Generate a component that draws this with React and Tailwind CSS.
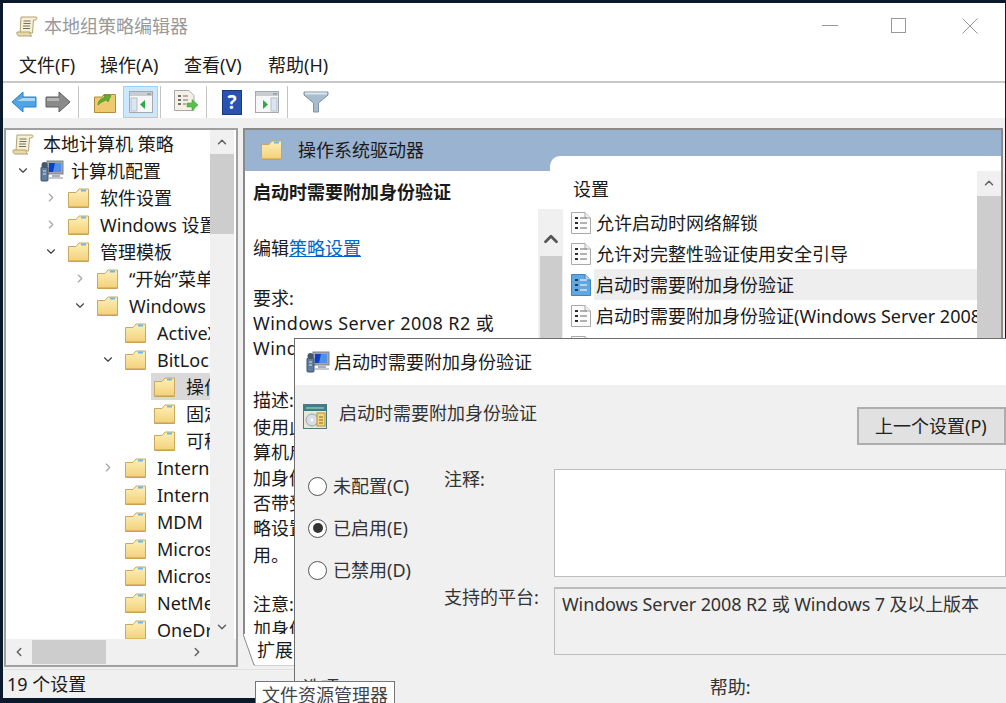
import { ChevronDown, ChevronLeft, ChevronRight, ChevronUp } from "lucide-react";

const FolderIcon = () => (
  <svg width="21" height="20" viewBox="0 0 21 20" className="shrink-0">
    <defs>
      <linearGradient id="fold" x1="0" y1="0" x2="0" y2="1">
        <stop offset="0" stopColor="#fdf0b8" />
        <stop offset="1" stopColor="#f3d078" />
      </linearGradient>
    </defs>
    <path d="M0.5 4.5 L0.5 19.5 L20.5 19.5 L20.5 1 L11 1 L8 4.5 Z" fill="url(#fold)" stroke="#c9a95f" />
    <path d="M13 1.5 H18 V3.5 H13 Z" fill="#6db6ea" />
    <path d="M1 18.5 H20 V19.5 H1 Z" fill="#c69c4e" />
  </svg>
);

const ScrollIcon = () => (
  <svg width="22" height="22" viewBox="0 0 22 22" className="shrink-0">
    <path d="M5 2 H20 C21.5 2 21.5 5 19 5 L17.5 5 L16.5 18 H4 Z" fill="#f6efd2" stroke="#b0a273" />
    <path d="M1 17 H14 C14 19 15 21 16 21 H3 C1.5 21 0.5 19 1 17 Z" fill="#e9d9a4" stroke="#b0a273" />
    <path d="M7.5 6 H14.5 M7.5 8.5 H14.5 M7 11 H14 M7 13.5 H14" stroke="#6f6f6f" />
  </svg>
);

const ComputerIcon = () => (
  <svg width="24" height="22" viewBox="0 0 24 22" className="shrink-0">
    <rect x="7" y="1" width="16" height="13" fill="#9fa6b0" stroke="#7c8490" />
    <rect x="9" y="3" width="12" height="9" fill="#0b3fd0" />
    <path d="M15 3 H21 V12 H13 Z" fill="#4f8ff0" />
    <rect x="12" y="15" width="8" height="2" fill="#aab0b8" />
    <rect x="9" y="17" width="14" height="2" fill="#c4c8ce" />
    <rect x="1" y="7" width="7" height="14" rx="1" fill="#5f7d9c" stroke="#3b5670" />
    <circle cx="4.5" cy="5" r="3" fill="#45586d" />
    <path d="M3 11 H6 M3 14 H6" stroke="#d8e4ee" />
  </svg>
);

const DocIcon = ({ active }) => (
  <svg width="20" height="22" viewBox="0 0 20 22" className="shrink-0">
    <path
      d="M0.5 0.5 H14 L19.5 6 V21.5 H0.5 Z"
      fill={active ? "#63a7e0" : "#fbfbfb"}
      stroke={active ? "#3d86c6" : "#a9a9a9"}
    />
    <path d="M14 0.5 V6 H19.5" fill={active ? "#a9d0ef" : "#eeeeee"} stroke={active ? "#3d86c6" : "#a9a9a9"} />
    <path d="M4 6 H7 M4 11 H7 M4 16 H7" stroke={active ? "#173f66" : "#2b2b2b"} strokeWidth="2" />
    <path d="M9 6 H16 M9 11 H16 M9 16 H16" stroke={active ? "#cfe5f7" : "#9a9a9a"} strokeWidth="1.5" />
  </svg>
);

const PaneIcon = ({ flip }) => (
  <svg width="24" height="22" viewBox="0 0 24 22">
    <rect x="0.5" y="0.5" width="23" height="21" fill="#f7f7f7" stroke="#a4a9ae" />
    <rect x="1" y="1" width="22" height="4" fill="#c9cdd2" />
    <path d="M18 3 H22" stroke="#7c838a" />
    {flip ? (
      <>
        <rect x="16" y="7" width="6" height="13" fill="#dbe6f2" stroke="#b4bec8" />
        <path d="M8 9 L13 13.5 L8 18 Z" fill="#2da84a" />
      </>
    ) : (
      <>
        <rect x="2" y="7" width="6" height="13" fill="#dbe6f2" stroke="#b4bec8" />
        <path d="M16 9 L11 13.5 L16 18 Z" fill="#2da84a" />
      </>
    )}
  </svg>
);

const Sep = () => <div className="h-[32px] w-px bg-[#c4c4c4]" />;

const tree = [
  { label: "计算机配置", pad: "pl-[10px]", arrow: "down", computer: true },
  { label: "软件设置", pad: "pl-[38px]", arrow: "right" },
  { label: "Windows 设置", pad: "pl-[38px]", arrow: "right" },
  { label: "管理模板", pad: "pl-[38px]", arrow: "down" },
  { label: "“开始”菜单和任务栏", pad: "pl-[67px]", arrow: "right" },
  { label: "Windows 组件", pad: "pl-[67px]", arrow: "down" },
  { label: "ActiveX Installer", pad: "pl-[95px]" },
  { label: "BitLocker 驱动器加密", pad: "pl-[95px]", arrow: "down" },
  { label: "操作系统驱动器", pad: "pl-[124px]", selected: true },
  { label: "固定数据驱动器", pad: "pl-[124px]" },
  { label: "可移动数据驱动器", pad: "pl-[124px]" },
  { label: "Internet Explorer", pad: "pl-[95px]", arrow: "right" },
  { label: "Internet Information", pad: "pl-[95px]" },
  { label: "MDM", pad: "pl-[95px]" },
  { label: "Microsoft Edge", pad: "pl-[95px]" },
  { label: "Microsoft Secondary", pad: "pl-[95px]" },
  { label: "NetMeeting", pad: "pl-[95px]" },
  { label: "OneDrive", pad: "pl-[95px]" },
];

const settings = [
  { label: "允许启动时网络解锁" },
  { label: "允许对完整性验证使用安全引导" },
  { label: "启动时需要附加身份验证", active: true },
  { label: "启动时需要附加身份验证(Windows Server 2008 和 Windows Vista)" },
  { label: "禁止标准用户更改 PIN 或密码" },
];

const Radio = ({ label, checked }) => (
  <div className="flex h-[42px] items-center gap-[6px]">
    <span className="flex h-[19px] w-[19px] items-center justify-center rounded-full border-[1.5px] border-[#555555] bg-white">
      {checked && <span className="h-[10px] w-[10px] rounded-full bg-[#333333]" />}
    </span>
    <span>{label}</span>
  </div>
);

export default function App() {
  return (
    <div
      className="relative h-[703px] w-[1006px] overflow-hidden bg-[#0a1a2c] pb-[5px] pl-[3px] pr-px pt-[3px] text-[18px] leading-[26px] text-[#1a1a1a]"
      style={{ fontFamily: '"Noto Sans", "Noto Sans CJK SC", sans-serif' }}
    >
      <div className="flex h-full flex-col bg-[#f0f0f0]">
        {/* title bar */}
        <div className="flex h-[46px] items-center bg-white pb-[1px] pl-[13px]">
          <ScrollIcon />
          <span className="ml-[6px] text-[#999999]">本地组策略编辑器</span>
          <div className="ml-auto flex items-center pr-[27px]">
            <div className="h-px w-[16px] bg-[#999999]" />
            <div className="ml-[53px] h-[15px] w-[15px] border border-[#999999]" />
            <svg width="16" height="16" viewBox="0 0 16 16" className="ml-[56px]">
              <path d="M0.5 0.5 L15.5 15.5 M15.5 0.5 L0.5 15.5" stroke="#999999" />
            </svg>
          </div>
        </div>

        {/* menu */}
        <div className="flex h-[34px] items-center border-b-2 border-[#c8c8c8] bg-white pl-[16px]">
          <span className="w-[81px]">文件(F)</span>
          <span className="w-[84px]">操作(A)</span>
          <span className="w-[84px]">查看(V)</span>
          <span>帮助(H)</span>
        </div>

        {/* toolbar */}
        <div className="flex h-[35px] items-center bg-white pl-[8px] pt-[3px]">
          <svg width="26" height="22" viewBox="0 0 26 22">
            <path d="M1 11 L12 1 V6 H25 V16 H12 V21 Z" fill="#4ea6e8" stroke="#2f7fc0" />
            <path d="M12 7 H24 V10 H6 Z" fill="#a9d8f8" />
          </svg>
          <svg width="26" height="22" viewBox="0 0 26 22" className="ml-[8px]">
            <path d="M25 11 L14 1 V6 H1 V16 H14 V21 Z" fill="#8a8a8a" stroke="#5f5f5f" />
            <path d="M2 7 H14 V10 H2 Z" fill="#b5b5b5" />
          </svg>
          <div className="ml-[7px]">
            <Sep />
          </div>
          <svg width="22" height="21" viewBox="0 0 22 21" className="ml-[15px]">
            <path d="M0.5 5 H8 L10 2.5 H21.5 V20.5 H0.5 Z" fill="#efc96f" stroke="#b08c3c" />
            <path d="M4 13 C4 8 8 6 11 5.5 L9.5 3 L17 3.5 L14 10 L12.5 8 C10 9 7 10 4 13 Z" fill="#5fae2e" stroke="#3c7d1a" strokeWidth="0.5" />
          </svg>
          <div className="ml-[7px] flex h-[32px] w-[35px] items-center justify-center border border-[#99d1ff] bg-[#cce8ff]">
            <PaneIcon />
          </div>
          <div className="ml-[2px]">
            <Sep />
          </div>
          <svg width="24" height="24" viewBox="0 0 24 24" className="ml-[13px]">
            <path d="M0.5 0.5 H15 L20 5.5 V20.5 H0.5 Z" fill="#f4f1e4" stroke="#a9a9a9" />
            <path d="M4 6 H7 M4 10 H7 M4 14 H7" stroke="#444444" strokeWidth="1.5" />
            <path d="M9 6 H14 M9 10 H14 M9 14 H12" stroke="#999999" strokeWidth="1.5" />
            <path d="M13 13 H18 V9.5 L24 15 L18 20.5 V17 H13 Z" fill="#58c04a" stroke="#3d9a32" strokeWidth="0.5" />
          </svg>
          <div className="ml-[8px]">
            <Sep />
          </div>
          <div className="ml-[15px] flex h-[25px] w-[20px] items-center justify-center border border-[#17397f] bg-[#2a52b0] text-[19px] font-bold leading-none text-white">
            ?
          </div>
          <div className="ml-[13px]">
            <PaneIcon flip />
          </div>
          <div className="ml-[8px]">
            <Sep />
          </div>
          <svg width="26" height="22" viewBox="0 0 26 22" className="ml-[15px]">
            <path d="M1 1 H25 V4 L15.5 12 V21 H10.5 V12 L1 4 Z" fill="#a7bccd" stroke="#7f93a4" />
            <path d="M2 1.5 H24 V3.5 H2 Z" fill="#dce6ee" />
          </svg>
        </div>

        {/* panes */}
        <div className="flex flex-1 gap-[5px] pl-px pr-[2px] pt-[10px]">
          <div className="flex h-[539px] w-[234px] shrink-0 flex-col border-2 border-[#a0a0a0] bg-white">
            <div className="flex h-[509px]">
              <div className="w-[204px] overflow-hidden">
                <div className="flex h-[27px] items-center gap-[9px] pl-[6px]">
                  <ScrollIcon />
                  <span className="whitespace-nowrap">本地计算机 策略</span>
                </div>
                {tree.map((row) => (
                  <div key={row.label} className={`flex h-[27px] items-center ${row.pad}`}>
                    <span className="flex w-[14px] shrink-0 justify-center">
                      {row.arrow === "down" && <ChevronDown size={15} color="#444444" strokeWidth={2} />}
                      {row.arrow === "right" && <ChevronRight size={15} color="#a6a6a6" strokeWidth={2} />}
                    </span>
                    <div
                      className={`ml-[7px] flex h-[27px] min-w-0 flex-1 items-center overflow-hidden pl-[3px] ${
                        row.computer ? "gap-[7px]" : "gap-[11px]"
                      } ${row.selected ? "bg-[#d9d9d9]" : ""}`}
                    >
                      {row.computer ? <ComputerIcon /> : <FolderIcon />}
                      <span className="whitespace-nowrap">{row.label}</span>
                    </div>
                  </div>
                ))}
              </div>
              <div className="flex w-[24px] flex-col items-center bg-[#f0f0f0]">
                <div className="flex h-[24px] items-center">
                  <ChevronUp size={14} color="#606060" strokeWidth={2.5} />
                </div>
                <div className="h-[80px] w-full bg-[#cdcdcd]" />
                <div className="mt-auto flex h-[24px] items-center">
                  <ChevronDown size={14} color="#606060" strokeWidth={2.5} />
                </div>
              </div>
            </div>
            <div className="flex h-[26px] items-center bg-[#f0f0f0]">
              <div className="flex w-[26px] justify-center">
                <ChevronLeft size={14} color="#606060" strokeWidth={2.5} />
              </div>
              <div className="h-[24px] w-[74px] bg-[#cdcdcd]" />
              <div className="ml-[78px] flex w-[26px] justify-center">
                <ChevronRight size={14} color="#606060" strokeWidth={2.5} />
              </div>
            </div>
          </div>

          <div className="flex h-[539px] min-w-0 flex-1 flex-col">
            <div className="flex min-h-0 flex-1 flex-col overflow-hidden border-l-2 border-r-2 border-t-2 border-[#8a8a8a] bg-white">
              <div className="flex h-[41px] shrink-0 justify-between bg-[#9ab3d1]">
                <div className="flex items-center gap-[16px] pb-[1px] pl-[16px]">
                  <FolderIcon />
                  <span>操作系统驱动器</span>
                </div>
                <div className="h-[15px] w-[451px] self-end rounded-tl-[10px] bg-white" />
              </div>
              <div className="flex min-h-0 flex-1">
                <div className="flex w-[320px] shrink-0 overflow-hidden">
                  <div className="w-[293px] shrink-0 overflow-hidden whitespace-nowrap pl-[8px] pt-[8px] [&>p]:h-[25px]">
                    <p className="font-bold">启动时需要附加身份验证</p>
                    <p className="mt-[31px]">
                      编辑<span className="text-[#0066cc] underline">策略设置</span>
                    </p>
                    <p className="mt-[25px]">要求:</p>
                    <p className="tracking-[0.45px]">Windows Server 2008 R2 或</p>
                    <p className="tracking-[0.45px]">Windows 7 及以上版本</p>
                    <p className="mt-[27px]">描述:</p>
                    <p className="mt-[2px]">使用此策略设置可以配置</p>
                    <p>算机启动时是否需要附</p>
                    <p className="mt-px">加身份验证，以及是</p>
                    <p>否带受信任的平台模块</p>
                    <p>略设置在打开时应</p>
                    <p className="mt-[2px]">用。</p>
                    <p className="mt-[24px]">注意:</p>
                    <p>加身份验证</p>
                  </div>
                  <div className="mt-[38px] flex w-[25px] shrink-0 flex-col items-center bg-[#f0f0f0]">
                    <div className="flex h-[51px] items-center pt-[14px]">
                      <ChevronUp size={22} color="#555555" strokeWidth={3} />
                    </div>
                    <div className="h-full w-[22px] bg-[#cdcdcd]" />
                  </div>
                </div>
                <div className="min-w-0 flex-1 pl-[6px]">
                  <div className="flex h-[36px] items-center pl-[2px]">设置</div>
                  {settings.map((row) => (
                    <div key={row.label} className="flex h-[31px] items-center gap-[3px]">
                      <DocIcon active={row.active} />
                      <span
                        className={`flex h-[31px] min-w-0 flex-1 items-center overflow-hidden whitespace-nowrap pl-[2px] ${
                          row.active ? "bg-[#eeeeee]" : ""
                        }`}
                      >
                        {row.label}
                      </span>
                    </div>
                  ))}
                </div>
                <div className="flex w-[24px] shrink-0 flex-col items-center bg-[#f0f0f0]">
                  <div className="flex h-[26px] items-center">
                    <ChevronUp size={14} color="#606060" strokeWidth={2.5} />
                  </div>
                  <div className="h-full w-full bg-[#cdcdcd]" />
                </div>
              </div>
            </div>
            <div className="flex h-[33px] shrink-0">
              <svg width="12" height="33" viewBox="0 0 12 33" className="shrink-0">
                <path d="M0 0 L11 31 H12 V0 Z" fill="#ffffff" />
                <path d="M0 0 L11 31 H12" fill="none" stroke="#8a8a8a" />
              </svg>
              <div className="h-[32px] w-[50px] border-b border-[#d0d0d0] bg-white pl-[2px] pt-[3px]">扩展</div>
            </div>
          </div>
        </div>

        {/* status bar */}
        <div className="flex h-[29px] shrink-0 items-center border-t border-[#e0e0e0] pl-[4px]">19 个设置</div>
      </div>

      {/* policy dialog window on top */}
      <div className="absolute left-[294px] top-[338px] flex h-[365px] w-[712px] flex-col border-l border-t border-[#6e6e6e] bg-[#f0f0f0]">
        <div className="flex h-[46px] shrink-0 items-center gap-[4px] bg-white pl-[11px]">
          <ComputerIcon />
          <span>启动时需要附加身份验证</span>
        </div>
        <div className="flex h-[84px] shrink-0">
          <svg width="24" height="25" viewBox="0 0 24 25" className="ml-[8px] mt-[19px] shrink-0">
            <rect x="0.5" y="0.5" width="23" height="24" fill="#e9e6d8" stroke="#4b7b80" />
            <rect x="1" y="1" width="22" height="6" fill="#3d7f88" />
            <path d="M3 4 H21" stroke="#c2d8da" />
            <circle cx="9" cy="16" r="6" fill="#d8dce6" stroke="#9aa0aa" />
            <circle cx="9" cy="16" r="1.5" fill="#ffffff" />
            <rect x="14" y="9" width="8" height="13" fill="#f4d676" stroke="#b2923c" />
            <path d="M16 13 H20 M16 16 H20 M16 19 H20" stroke="#7f6a2a" />
          </svg>
          <span className="ml-[12px] mt-[15px] text-[#333333]">启动时需要附加身份验证</span>
          <div className="ml-auto mt-[22px] flex h-[38px] w-[149px] items-center border-2 border-[#adadad] bg-[#e1e1e1] pl-[16px] text-[#222222]">
            上一个设置(P)
          </div>
        </div>
        <div className="flex h-[190px] shrink-0">
          <div className="-mt-[4px] w-[149px] shrink-0 pl-[13px] text-[#333333]">
            <Radio label="未配置(C)" />
            <Radio label="已启用(E)" checked />
            <Radio label="已禁用(D)" />
          </div>
          <div className="flex min-w-0 flex-1 flex-col gap-[10px]">
            <div className="flex">
              <span className="-mt-[3px] w-[110px] shrink-0 text-[#333333]">注释:</span>
              <div className="h-[108px] flex-1 border border-[#bdbdbd] bg-white" />
            </div>
            <div className="flex">
              <span className="-mt-[3px] w-[110px] shrink-0 text-[#333333]">支持的平台:</span>
              <div className="h-[68px] flex-1 whitespace-nowrap border-b border-l border-t-2 border-[#bdbdbd] pl-[7px] pt-[2px] tracking-[-0.12px] text-[#333333]">
                Windows Server 2008 R2 或 Windows 7 及以上版本
              </div>
            </div>
          </div>
        </div>
        <div className="flex pl-[8px] pt-[15px] text-[#333333]">
          <span>选项:</span>
          <span className="ml-[366px]">帮助:</span>
        </div>
      </div>

      {/* tooltip */}
      <div className="absolute left-[255px] top-[681px] h-[24px] border border-[#767676] bg-white px-[6px] text-[#444444]">
        文件资源管理器
      </div>
    </div>
  );
}
